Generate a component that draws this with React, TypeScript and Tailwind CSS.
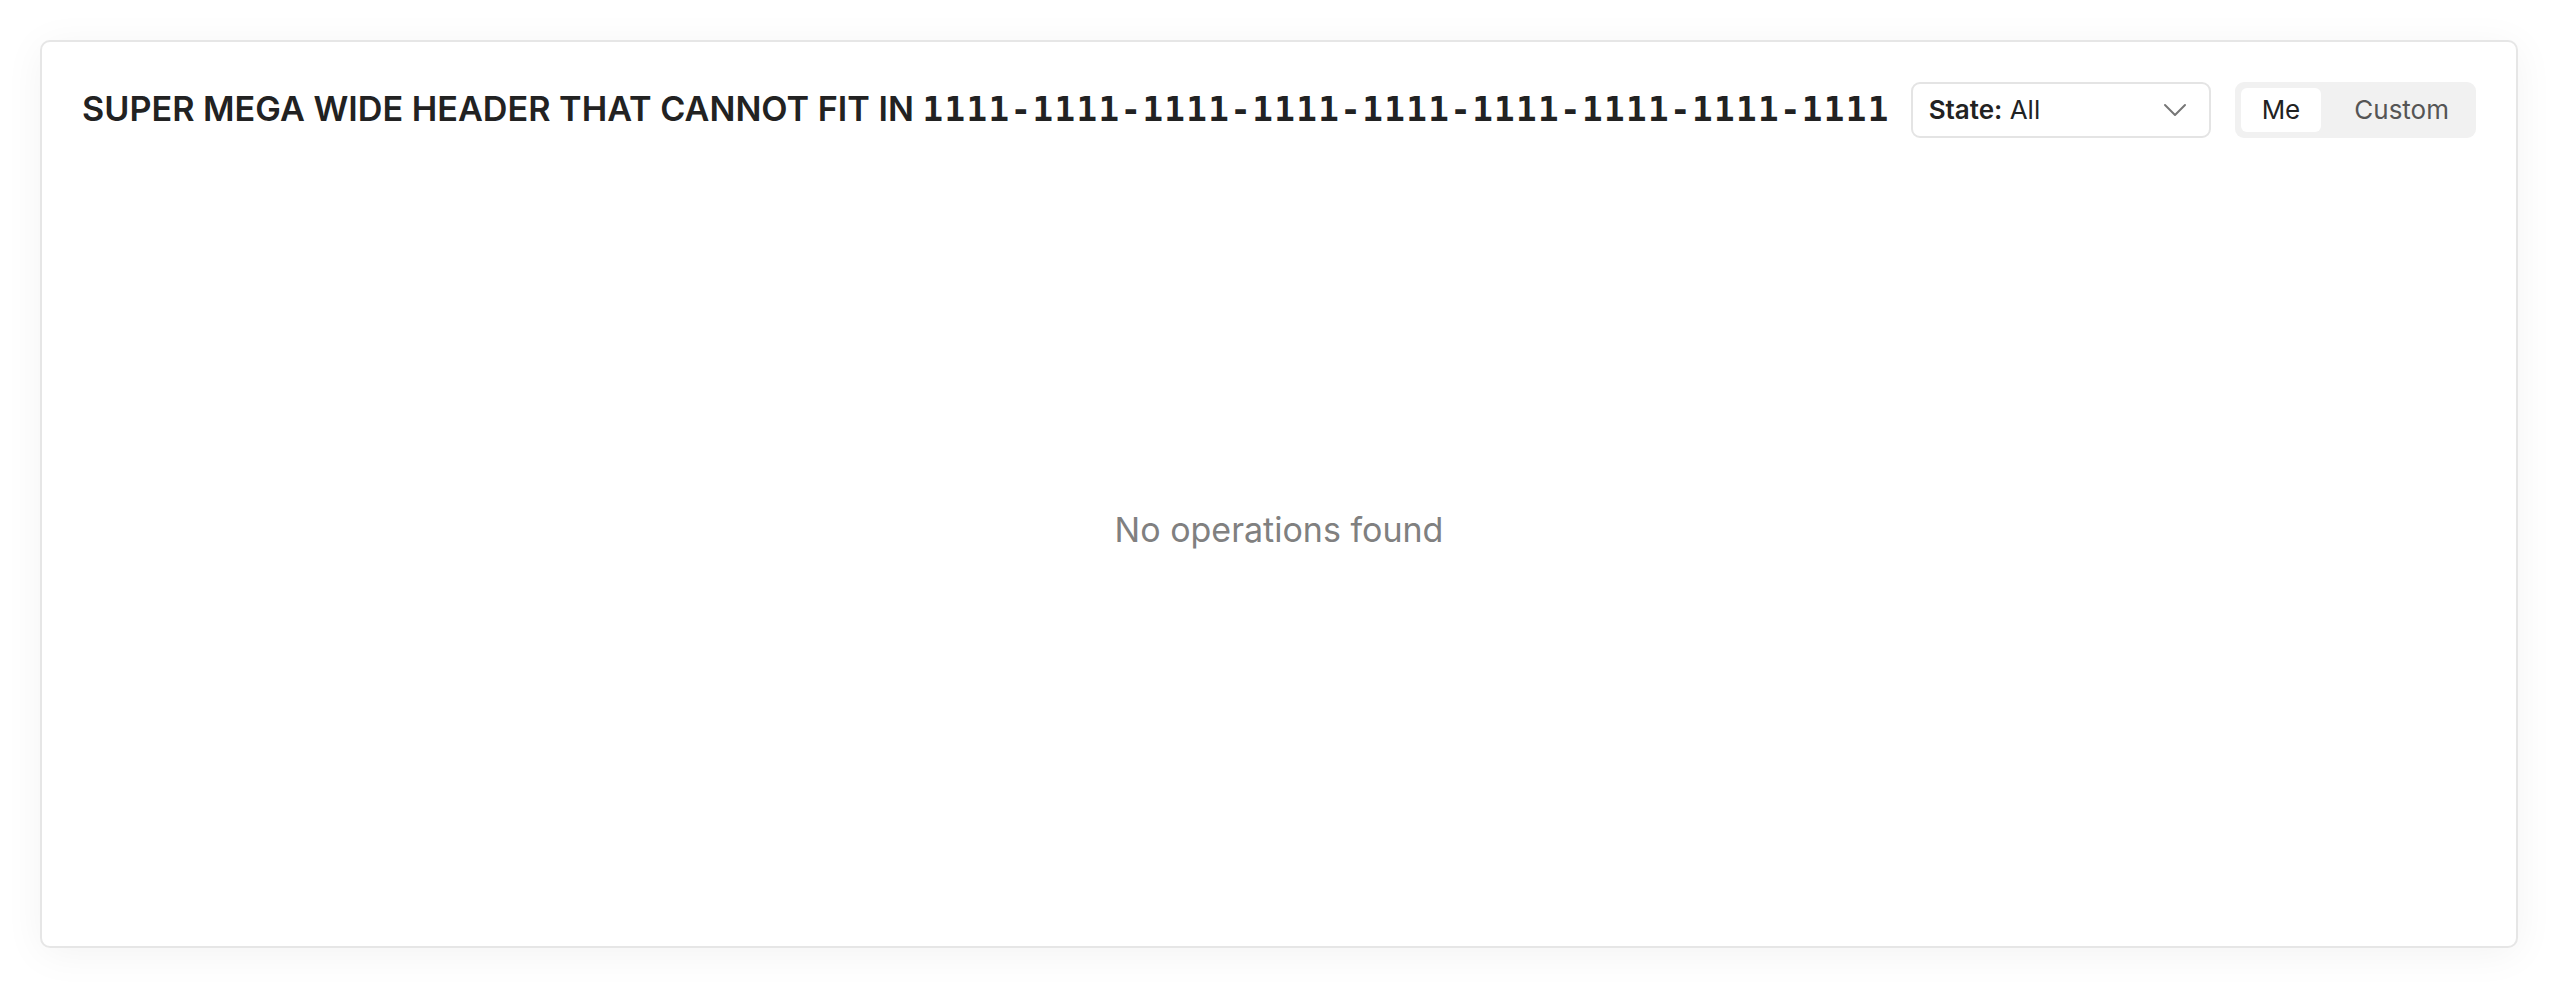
import { ChevronDown } from 'lucide-react';

export default function App() {
  return (
    <div className="min-h-[990px] w-full bg-white p-[40px] font-['Inter',sans-serif]">
      <div className="flex h-[908px] flex-col rounded-[10px] border-[2px] border-[#e6e6e6] bg-white px-[40px] pt-[40px] pb-[40px] shadow-[0_6px_40px_rgba(0,0,0,0.05)]">
        <div className="flex items-center">
          <h1 className="mb-[3px] flex-1 whitespace-nowrap text-[34.2px] leading-[40px] font-semibold text-[#222222]">
            SUPER MEGA WIDE HEADER THAT CANNOT FIT IN{' '}
            <span className="font-['DejaVu_Sans_Mono',monospace] font-bold tracking-[1.4px]">
              1111-1111-1111-1111-1111-1111-1111-1111-1111
            </span>
          </h1>
          <button className="ml-[15px] flex h-[56px] w-[300px] items-center justify-between rounded-[9px] border-[2px] border-[#e4e4e4] bg-white pl-[16px] pr-[14px] text-[26px] leading-[32px] text-[#222222]">
            <span>
              <span className="font-semibold">State:</span> All
            </span>
            <ChevronDown className="h-[40px] w-[40px] text-[#777777]" strokeWidth={1.2} />
          </button>
          <div className="ml-[24px] flex h-[56px] items-stretch rounded-[9px] bg-[#f1f1f1] p-[6px] text-[26px] leading-[32px]">
            <div className="flex items-center rounded-[6px] bg-white px-[21px] text-[#222222]">Me</div>
            <div className="ml-[12px] flex items-center px-[21px] text-[#555555]">Custom</div>
          </div>
        </div>
        <div className="flex flex-1 items-center justify-center pt-[14px]">
          <p className="text-[34px] text-[#808080]">No operations found</p>
        </div>
      </div>
    </div>
  );
}
